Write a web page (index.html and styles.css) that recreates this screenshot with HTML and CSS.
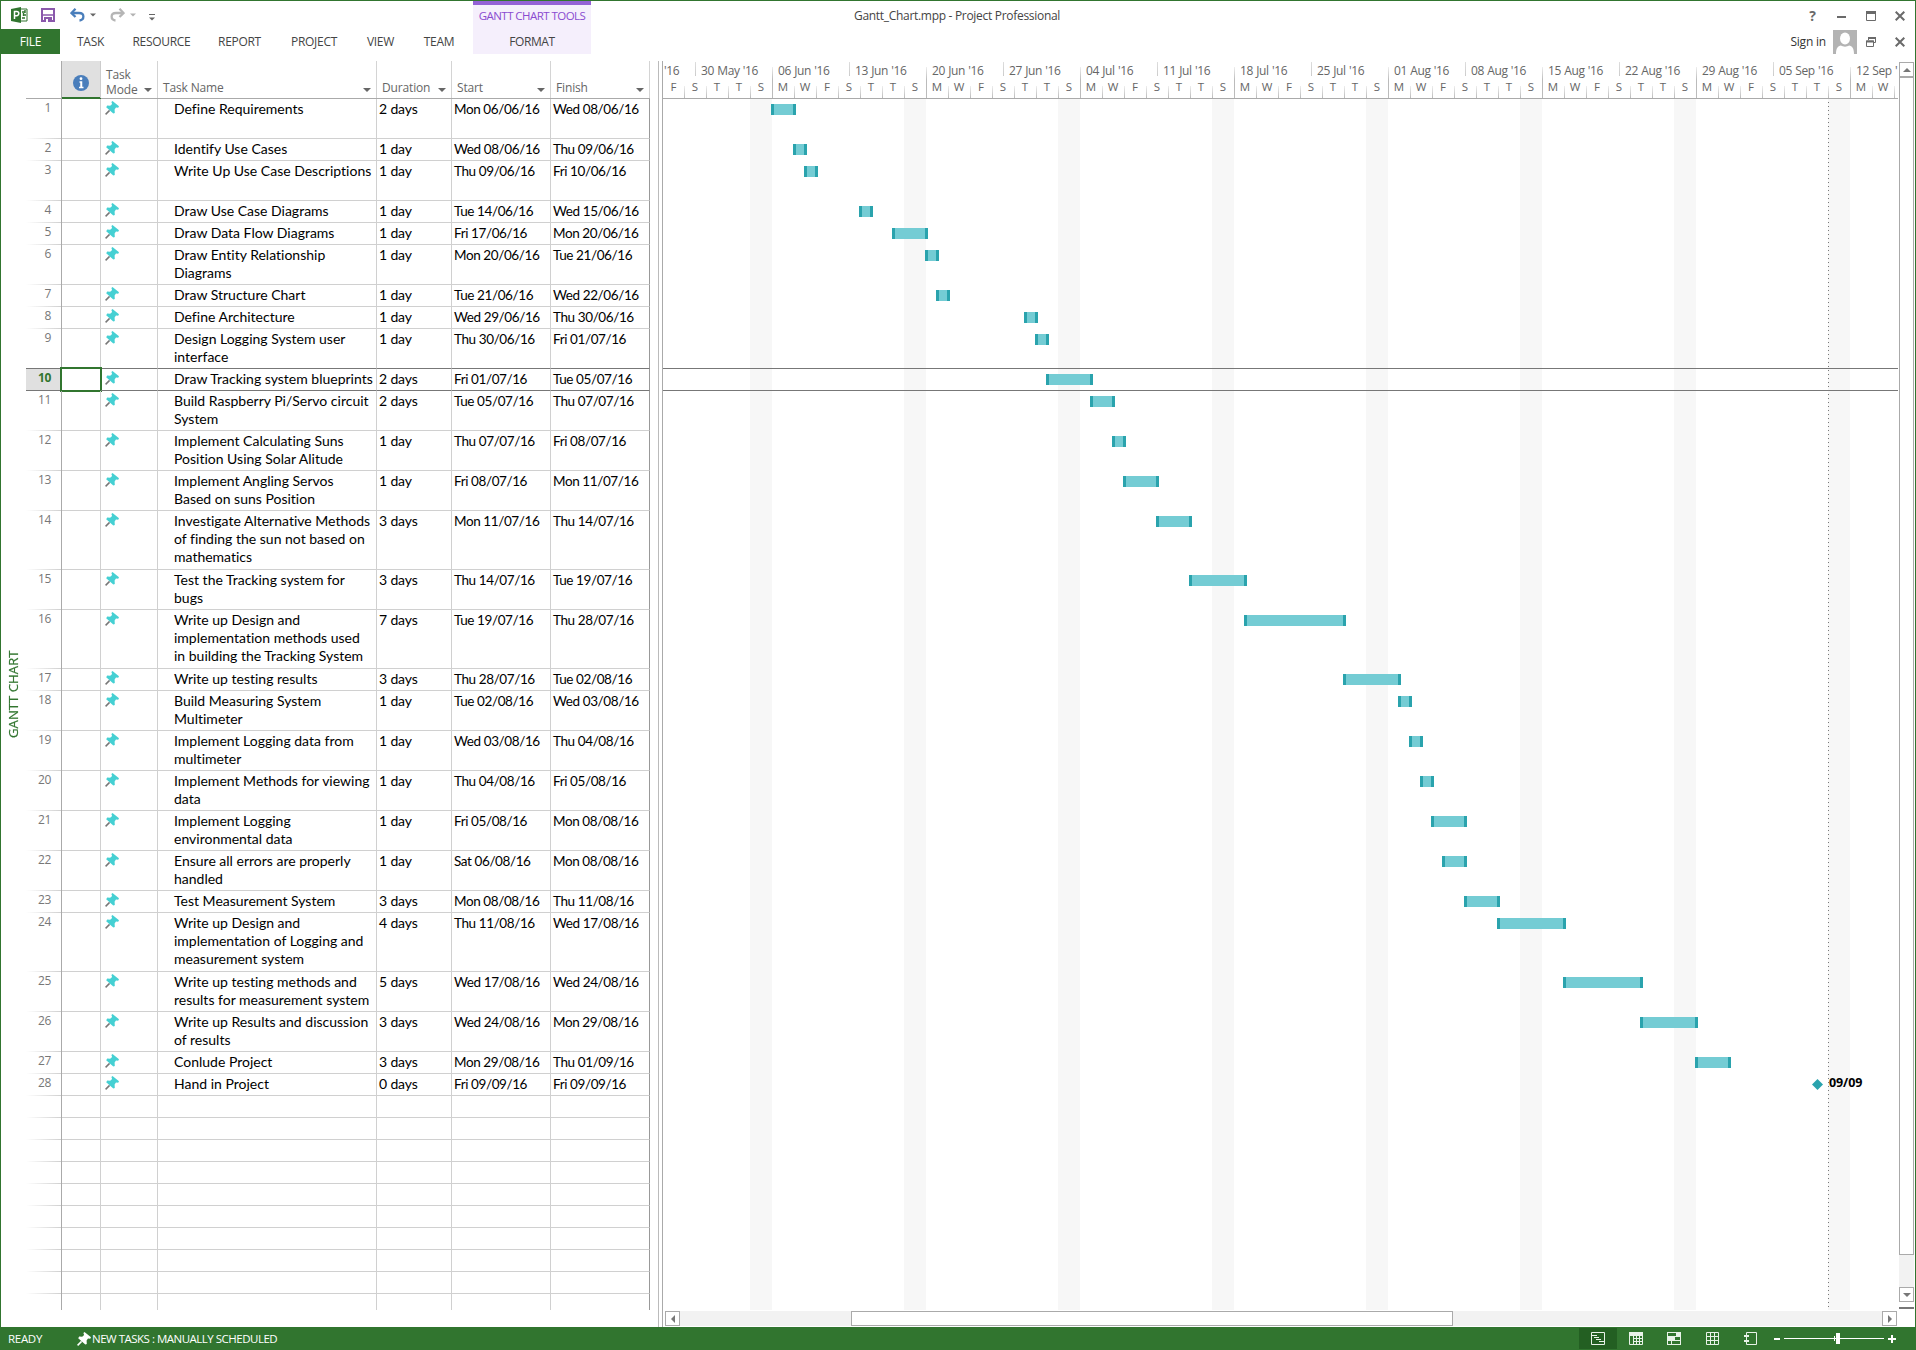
FILE: index.html
```html
<!DOCTYPE html>
<html lang="en">
<head>
<meta charset="utf-8">
<title>Gantt_Chart.mpp - Project Professional</title>
<link rel="stylesheet" href="styles.css">
</head>
<body>
<svg class="defs" width="0" height="0">
  <symbol id="pin" viewBox="0 0 14 14"><path d="M4.6 9.4 .6 13.4" stroke="#777" stroke-width="1.5" fill="none"/><path d="M7.500 0 14 5.200 13.200 6.700 11 6.500 9.600 8.500 9.800 12 8.300 12.500 1.200 6.300 2.200 4.600 5.200 4.800 7.100 3 6.400 1Z" fill="currentColor"/></symbol>
</svg>
<div class="window">
  <header class="top">
    <div class="top-left">
      <div class="quick">
        <svg class="app" width="17" height="16" viewBox="0 0 17 16"><path d="M9 2h7v12H9z" fill="#fff" stroke="#31752f"/><path d="M11 5h3M12 8h3M11 11h3M14 3v3M12.500 6v3" stroke="#31752f" stroke-width="1.400"/><path d="M0 2 10 0v16L0 14z" fill="#31752f"/><path d="M3.500 12V4.500h2.200a2 2 0 0 1 0 4.200H3.500" stroke="#fff" stroke-width="1.500" fill="none"/></svg>
        <svg class="save" width="14" height="14" viewBox="0 0 14 14"><path d="M1 1h12v12H1z" fill="#fff" stroke="#8a58ab" stroke-width="2"/><path d="M1 7h12" stroke="#8a58ab" stroke-width="1.500"/><path d="M3 9h8v4H3z" fill="#8a58ab"/><path d="M5 11h2v3H5z" fill="#fff"/></svg>
        <svg class="undo" width="15" height="14" viewBox="0 0 15 14"><path d="M2 5h7c6 0 5.500 7 .5 7.500" fill="none" stroke="#4a7ebb" stroke-width="2.300"/><path d="M5.500 .8 1.500 5l4 4" fill="none" stroke="#4a7ebb" stroke-width="2.300"/></svg>
        <i class="arrow"></i>
        <svg class="redo" width="15" height="14" viewBox="0 0 15 14"><path d="M13 5H6c-6 0-5.500 7-.5 7.500" fill="none" stroke="#b5b5b5" stroke-width="2.300"/><path d="M9.500 .8l4 4.200-4 4" fill="none" stroke="#b5b5b5" stroke-width="2.300"/></svg>
        <i class="arrow dim"></i>
        <span class="more"><i class="arrow"></i></span>
      </div>
      <nav class="tabs">
        <a class="file">FILE</a><a style="width:57px">TASK</a><a style="width:85px">RESOURCE</a><a style="width:71px">REPORT</a><a style="width:78px">PROJECT</a><a style="width:55px">VIEW</a><a style="width:62px">TEAM</a>
      </nav>
    </div>
    <div class="context"><span class="context-name">GANTT CHART TOOLS</span><span class="context-tab">FORMAT</span></div>
    <div class="caption">Gantt_Chart.mpp - Project Professional</div>
    <div class="controls">
      <div class="ctl-row">
        <b class="help">?</b>
        <svg width="10" height="10"><path d="M0 6h9" stroke="#6a6a6a" stroke-width="2"/></svg>
        <svg width="10" height="10"><path d="M.5 .5h9v9h-9z" fill="none" stroke="#6a6a6a"/><path d="M0 1.500h10" stroke="#6a6a6a" stroke-width="3"/></svg>
        <svg width="10" height="10"><path d="M.7.7l8.600 8.600M9.300.7.7 9.300" stroke="#6a6a6a" stroke-width="2"/></svg>
      </div>
      <div class="ctl-row account">
        <span class="signin">Sign in</span>
        <svg class="avatar" width="24" height="24"><path d="M0 0h24v24H0z" fill="#b3b3b3"/><ellipse cx="12" cy="8.500" rx="5" ry="6" fill="#fff"/><path d="M3 24c0-6 2-8 5-8.500 2 1.500 6 1.500 8 0 3 .5 5 2.500 5 8.500z" fill="#fff"/></svg>
        <svg width="10" height="10"><path d="M2.500 3V.5h7v5H8" fill="none" stroke="#6a6a6a"/><path d="M2 1h8" stroke="#6a6a6a" stroke-width="2"/><path d="M.5 4h7v5.500h-7z" fill="#fff" stroke="#6a6a6a"/><path d="M0 4.500h8" stroke="#6a6a6a" stroke-width="2"/></svg>
        <svg width="10" height="10"><path d="M.7.7l8.600 8.600M9.300.7.7 9.300" stroke="#6a6a6a" stroke-width="2"/></svg>
      </div>
    </div>
  </header>

  <main class="work">
    <aside class="rail"><span>GANTT CHART</span></aside>
    <section class="sheet">
      <div class="head">
        <div class="h-num"></div>
        <div class="h-info"><svg width="16" height="16"><circle cx="8" cy="8" r="8" fill="#4a7ebb"/><path d="M6.500 7H8v5.500M6 12.500h4.500M8.500 6.300v6" fill="none" stroke="#fff" stroke-width="1.500"/><circle cx="8" cy="3.700" r="1.400" fill="#fff"/></svg></div>
        <div class="h-cell mode"><span>Task<br>Mode</span><i class="arrow"></i></div>
        <div class="h-cell"><span>Task Name</span><i class="arrow"></i></div>
        <div class="h-cell"><span>Duration</span><i class="arrow"></i></div>
        <div class="h-cell"><span>Start</span><i class="arrow"></i></div>
        <div class="h-cell"><span>Finish</span><i class="arrow"></i></div>
      </div>
      <div class="rows" id="rows"></div>
    </section>
    <div class="splitter"></div>
    <section class="chart">
      <div class="scale">
        <div class="weeks" id="weeks"></div>
        <div class="days" id="days"></div>
      </div>
      <div class="canvas" id="canvas"></div>
      <div class="hscroll">
        <span class="btn"><i class="tri left"></i></span>
        <span class="hthumb"></span>
        <span class="btn"><i class="tri right"></i></span>
      </div>
    </section>
    <div class="vscroll">
      <span class="btn first"><i class="tri up"></i></span>
      <span class="vthumb"></span>
      <span class="vtrack"></span>
      <span class="btn"><i class="tri down"></i></span>
      <span class="grip"></span>
    </div>
  </main>

  <footer class="status">
    <span class="ready">READY</span>
    <svg class="s-pin" width="14" height="14"><use href="#pin"/></svg>
    <span class="sched">NEW TASKS : MANUALLY SCHEDULED</span>
    <div class="views">
      <span class="view on"><svg width="14" height="13"><path d="M.5.5h13v12H.5z" fill="none" stroke="#e8f2e8"/><path d="M1 3.500h5M3 5.500h5M5 7.500h5M8 9.500h5" stroke="#e8f2e8"/></svg></span>
      <span class="view"><svg width="14" height="13"><path d="M.5.5h13v12H.5z" fill="none" stroke="#e8f2e8"/><path d="M0 0h14v4H0z" fill="#e8f2e8"/><path d="M4.500 4v9M7.500 4v9M10.500 4v9M4 6.500h10M4 9.500h10" stroke="#e8f2e8"/></svg></span>
      <span class="view"><svg width="14" height="13"><path d="M0 0h14v13H0z" fill="#e8f2e8"/><path d="M1 1h8v3H1zM8 5h5v3H8zM1 9h3v3H1zM5 9h8v3H5z" fill="#31752f"/></svg></span>
      <span class="view"><svg width="13" height="13"><path d="M.5.5h12v12H.5zM4.500 0v13M8.500 0v13M0 4.500h13M0 8.500h13" fill="none" stroke="#e8f2e8"/></svg></span>
      <span class="view"><svg width="13" height="13"><path d="M2.500 3V.5h10v12h-10V10M2.500 5v3" fill="none" stroke="#e8f2e8"/><path d="M0 4h5M0 9h5" stroke="#e8f2e8" stroke-width="2"/></svg></span>
    </div>
    <svg class="zoom" width="124" height="13"><path d="M0 7h6M114 7h8M118 3v8" stroke="#fff" stroke-width="2"/><path d="M10 6.500h100M60.500 4v5" stroke="#fff"/><path d="M62 1h4v11h-4z" fill="#fff"/></svg>
  </footer>
</div>
<script src="app.js"></script>
</body>
</html>
```
FILE: styles.css
```css
* { box-sizing: border-box; }
html, body { height: 1350px; overflow: hidden; }
body { margin: 0; background: #fff; font-family: "Open Sans", "Noto Sans", sans-serif; font-size: 12px; color: #444; }
.defs { position: absolute; }
.window { width: 1916px; height: 1350px; border: 1px solid #31752f; border-bottom: 0; display: flex; flex-direction: column; overflow: hidden; }
.arrow { display: block; width: 0; height: 0; border: 4px solid transparent; border-top-color: #666; border-bottom: 0; flex: none; }

/* title bar and ribbon tabs */
.top { display: flex; height: 60px; flex: none; }
.top-left { width: 472px; }
.quick { height: 28px; display: flex; align-items: center; padding-left: 10px; }
.save { margin-left: 13px; }
.undo { margin-left: 15px; }
.redo { margin-left: 13px; }
.quick .arrow { margin-left: 4px; transform: scale(.75); }
.quick .dim { opacity: .5; }
.more { margin-left: 12px; border-top: 1px solid #666; width: 6px; height: 6px; padding-top: 2px; margin-top: 3px; }
.quick .more .arrow { margin-left: -1px; }
.tabs { display: flex; height: 25px; }
.tabs a { text-align: center; line-height: 25px; letter-spacing: -.3px; }
.tabs .file { width: 59px; margin-right: 2px; background: #31752f; color: #fff; }
.context { width: 118px; height: 53px; background: #f5effc; border-top: 4px solid #9461d6; display: flex; flex-direction: column; text-align: center; }
.context-name { color: #8a4bd0; height: 24px; line-height: 22px; font-size: 11.500px; letter-spacing: -.55px; white-space: nowrap; }
.context-tab { line-height: 25px; letter-spacing: -.4px; }
.caption { width: 732px; text-align: center; line-height: 29px; letter-spacing: -.3px; }
.controls { flex: 1; padding-right: 10px; }
.ctl-row { height: 28px; display: flex; align-items: center; justify-content: flex-end; gap: 19px; padding-top: 1px; }
.help { font-size: 14px; color: #6a6a6a; margin-right: 2px; }
.account { height: 25px; padding-top: 0; }
.signin { margin-right: -12px; color: #333; letter-spacing: -.2px; }
.avatar { margin-right: -10px; }

/* work area */
.work { flex: 1; display: flex; min-height: 0; }
.rail { width: 25px; display: flex; padding: 587px 0 0 2px; }
.rail span { writing-mode: vertical-rl; transform: rotate(180deg); color: #31752f; font-size: 13.200px; -webkit-text-stroke: .2px #31752f; line-height: 20px; height: 90px; white-space: nowrap; }
.sheet { width: 624px; }
.head, .row { display: grid; grid-template-columns: 36px 39px 57px 219px 75px 99px 99px; }
.head { height: 38px; border-bottom: 1px solid #aaa; color: #666; line-height: 15px; letter-spacing: -.15px; }
.h-num { border-right: 1px solid #aaa; }
.h-info { background: #e0e0e0; border-right: 1px solid #ccc; box-shadow: inset 0 -1px #31752f, 0 1px #31752f; display: flex; justify-content: center; padding-top: 14px; }
.h-cell { border-right: 1px solid #d4d4d4; display: flex; justify-content: space-between; align-items: flex-end; padding: 0 5px 3px 5px; white-space: nowrap; }
.h-cell .arrow { margin-bottom: 3px; }
.mode { padding-bottom: 1px; }
.mode .arrow { margin-bottom: 5px; }
.rows { height: 1211px; overflow: hidden; }
.row { color: #000; font-family: Lato, "Open Sans", sans-serif; font-size: 14px; line-height: 18px; font-variant-ligatures: none; }
.row > div { border-right: 1px solid #d0d0d0; border-bottom: 1px solid #d0d0d0; white-space: nowrap; padding: 1px 0 0 2px; }
.row > .num { border-right-color: #aaa; border-bottom: 0; background: linear-gradient(90deg, #fff, #d0d0d0) bottom / 100% 1px no-repeat; text-align: right; font: 12px/17px "Open Sans", sans-serif; letter-spacing: -.3px; color: #777; padding: 0 10px 0 0; }
.row > .pin { padding: 2px 0 0 4px; color: #45d0d3; line-height: 0; }
.row > .name { padding-left: 16px; }
.row > .dur { letter-spacing: -.15px; }
.row > .date { font-size: 13.500px; letter-spacing: -.4px; }
.row > .last { border-right-color: #999; }
.row.current > div { border-bottom-color: #777; }
.row.before > div { border-bottom-color: #777; }
.row.before > .num { background: linear-gradient(#777, #777) bottom / 100% 1px no-repeat; }
.row.current > .num { background: #e0e0e0; border-bottom: 1px solid #777; color: #31752f; font-weight: 700; }
.row.current > .ind { outline: 2px solid #31752f; outline-offset: -1px; margin: -1px 0 0 -1px; }
.splitter { width: 13px; background: linear-gradient(#bbb, #bbb) 8px 0 / 1px 100% no-repeat, linear-gradient(#aaa, #aaa) 12px 0 / 1px 100% no-repeat; }

/* timescale and bars */
.chart { width: 1235px; }
.scale { height: 38px; border-bottom: 1px solid #aaa; color: #666; overflow: hidden; }
.weeks, .days { display: flex; }
.weeks { height: 19px; }
.week { flex: none; width: 77px; height: 19px; line-height: 20px; letter-spacing: -.4px; word-spacing: .6px; padding-left: 6px; white-space: nowrap; background: linear-gradient(#ddd, #ccc) 0 1px / 1px 14px no-repeat; }
.week.major { background: linear-gradient(#eee, #bbb) 0 6px / 1px 13px no-repeat; }
.week:first-child { width: 32px; padding-left: 1px; background: none; }
.days { height: 18px; }
.day { flex: none; width: 22px; height: 18px; text-align: center; font-size: 11.500px; line-height: 13px; background: linear-gradient(#eee, #bbb) 0 6px / 1px 12px no-repeat; }
.day.major { background: linear-gradient(#bbb, #bbb) 0 0 / 1px 18px no-repeat; }
.day:first-child { width: 21px; background: none; }
.canvas { height: 1211px; background: repeating-linear-gradient(90deg, transparent 0 132px, #f7f7f7 132px 154px) -45px 0 / 1400px 100%; position: relative; }
.today { position: absolute; left: 1165px; top: 3px; bottom: 0; width: 1px; background: repeating-linear-gradient(#777 0 1px, transparent 1px 4px); }
.lane { padding-top: 5px; }
.lane.before, .lane.current { border-bottom: 1px solid #777; }
.bar { height: 11px; background: #74ccd4; border: solid #2aa3ad; border-width: 0 3px; }
.milestone { display: flex; align-items: center; height: 11px; gap: 6px; }
.milestone b { color: #000; font-family: "Open Sans", sans-serif; font-size: 12.500px; position: relative; top: -2px; letter-spacing: -.1px; }

/* scroll bars */
.btn { width: 15px; height: 15px; border: 1px solid #aaa; background: #fff; display: flex; align-items: center; justify-content: center; flex: none; }
.tri { width: 0; height: 0; border: 4px solid transparent; }
.up { border-top: 0; border-bottom-color: #777; }
.down { border-bottom: 0; border-top-color: #777; }
.left { border-left: 0; border-right-color: #777; }
.right { border-right: 0; border-left-color: #777; }
.hscroll { margin: 1px 1px 0 2px; height: 15px; background: #f2f2f2; display: flex; justify-content: space-between; }
.hthumb { width: 602px; margin-right: 259px; border: 1px solid #aaa; background: #fff; }
.vscroll { width: 15px; margin: 1px 0 0 1px; display: flex; flex-direction: column; }
.vthumb { height: 1178px; border: 1px solid #aaa; background: #fff; }
.vtrack { height: 32px; background: #f2f2f2; }
.grip { height: 6px; margin-top: 1px; border-bottom: 2px solid #777; }

/* status bar */
.status { height: 23px; flex: none; background: #31752f; margin: 0 -1px; color: #fff; display: flex; align-items: center; padding-left: 8px; font-size: 11.500px; letter-spacing: -.5px; }
.status .s-pin { filter: brightness(0) invert(1); }
.ready { width: 69px; letter-spacing: -.3px; }
.sched { margin-left: 1px; width: 1487px; white-space: nowrap; }
.views { display: flex; }
.view { width: 38px; height: 21px; display: flex; align-items: center; justify-content: center; }
.on { background: #235f22; }
.zoom { margin-left: 5px; }
```
FILE: app.js
```js
const tasks = [
  ["Define Requirements", "2 days", "Mon 06/06/16", "Wed 08/06/16", 40],
  ["Identify Use Cases", "1 day", "Wed 08/06/16", "Thu 09/06/16", 22],
  ["Write Up Use Case Descriptions", "1 day", "Thu 09/06/16", "Fri 10/06/16", 40],
  ["Draw Use Case Diagrams", "1 day", "Tue 14/06/16", "Wed 15/06/16", 22],
  ["Draw Data Flow Diagrams", "1 day", "Fri 17/06/16", "Mon 20/06/16", 22],
  ["Draw Entity Relationship|Diagrams", "1 day", "Mon 20/06/16", "Tue 21/06/16", 40],
  ["Draw Structure Chart", "1 day", "Tue 21/06/16", "Wed 22/06/16", 22],
  ["Define Architecture", "1 day", "Wed 29/06/16", "Thu 30/06/16", 22],
  ["Design Logging System user|interface", "1 day", "Thu 30/06/16", "Fri 01/07/16", 40],
  ["Draw Tracking system blueprints", "2 days", "Fri 01/07/16", "Tue 05/07/16", 22],
  ["Build Raspberry Pi/Servo circuit|System", "2 days", "Tue 05/07/16", "Thu 07/07/16", 40],
  ["Implement Calculating Suns|Position Using Solar Alitude", "1 day", "Thu 07/07/16", "Fri 08/07/16", 40],
  ["Implement Angling Servos|Based on suns Position", "1 day", "Fri 08/07/16", "Mon 11/07/16", 40],
  ["Investigate Alternative Methods|of finding the sun not based on|mathematics", "3 days", "Mon 11/07/16", "Thu 14/07/16", 59],
  ["Test the Tracking system for|bugs", "3 days", "Thu 14/07/16", "Tue 19/07/16", 40],
  ["Write up Design and|implementation methods used|in building the Tracking System", "7 days", "Tue 19/07/16", "Thu 28/07/16", 59],
  ["Write up testing results", "3 days", "Thu 28/07/16", "Tue 02/08/16", 22],
  ["Build Measuring System|Multimeter", "1 day", "Tue 02/08/16", "Wed 03/08/16", 40],
  ["Implement Logging data from|multimeter", "1 day", "Wed 03/08/16", "Thu 04/08/16", 40],
  ["Implement Methods for viewing|data", "1 day", "Thu 04/08/16", "Fri 05/08/16", 40],
  ["Implement Logging|environmental data", "1 day", "Fri 05/08/16", "Mon 08/08/16", 40],
  ["Ensure all errors are properly|handled", "1 day", "Sat 06/08/16", "Mon 08/08/16", 40],
  ["Test Measurement System", "3 days", "Mon 08/08/16", "Thu 11/08/16", 22],
  ["Write up Design and|implementation of Logging and|measurement system", "4 days", "Thu 11/08/16", "Wed 17/08/16", 59],
  ["Write up testing methods and|results for measurement system", "5 days", "Wed 17/08/16", "Wed 24/08/16", 40],
  ["Write up Results and discussion|of results", "3 days", "Wed 24/08/16", "Mon 29/08/16", 40],
  ["Conlude Project", "3 days", "Mon 29/08/16", "Thu 01/09/16", 22],
  ["Hand in Project", "0 days", "Fri 09/09/16", "Fri 09/09/16", 22]
];

const DAY = 11;      // pixels per day
const ORIGIN = 109;  // x of 6 June inside the chart
const CURRENT = 10;  // selected row

// days since 6 June 2016 for a "Mon 06/06/16" label
function dayIndex(label) {
  const [d, m, y] = label.slice(4).split("/").map(Number);
  return Math.round((Date.UTC(2000 + y, m - 1, d) - Date.UTC(2016, 5, 6)) / 864e5);
}

let rows = "", lanes = '<div class="today"></div>';
tasks.forEach(([name, duration, start, finish, h], i) => {
  const n = i + 1;
  const state = n === CURRENT ? " current" : n === CURRENT - 1 ? " before" : "";
  rows += `<div class="row${state}" style="height:${h}px"><div class="num">${n}</div><div class="ind"></div>` +
    `<div class="pin"><svg width="14" height="14"><use href="#pin"/></svg></div>` +
    `<div class="name">${name.replace(/\|/g, "<br>")}</div><div class="dur">${duration}</div>` +
    `<div class="date">${start}</div><div class="date last">${finish}</div></div>`;
  const a = dayIndex(start) * DAY + ORIGIN - 1;
  const w = (dayIndex(finish) - dayIndex(start)) * DAY + 3;
  const mark = duration === "0 days"
    ? `<div class="milestone" style="margin-left:${a - 4}px"><svg width="11" height="11"><path d="M5.500 0 11 5.500 5.500 11 0 5.500z" fill="#2aa3ad"/></svg><b>09/09</b></div>`
    : `<div class="bar" style="margin-left:${a}px;width:${w}px"></div>`;
  lanes += `<div class="lane${state}" style="height:${h}px">${mark}</div>`;
});
for (let i = 0; i < 10; i++) {
  rows += '<div class="row" style="height:22px"><div class="num"></div><div></div><div></div><div></div><div></div><div></div><div class="last"></div></div>';
}
document.getElementById("rows").innerHTML = rows;
document.getElementById("canvas").innerHTML = lanes;

const weeks = ["'16", "30 May '16", "06 Jun '16", "13 Jun '16", "20 Jun '16", "27 Jun '16", "04 Jul '16", "11 Jul '16", "18 Jul '16", "25 Jul '16", "01 Aug '16", "08 Aug '16", "15 Aug '16", "22 Aug '16", "29 Aug '16", "05 Sep '16", "12 Sep '16"];
document.getElementById("weeks").innerHTML = weeks.map((w, i) => `<span class="week${i && i % 2 === 0 ? " major" : ""}">${w}</span>`).join("");
let days = "";
for (let i = 0; i < 57; i++) {
  days += `<span class="day${i >= 5 && (i - 5) % 7 === 0 ? " major" : ""}">${i < 56 ? "FSTTSMW"[i % 7] : ""}</span>`;
}
document.getElementById("days").innerHTML = days;
```
